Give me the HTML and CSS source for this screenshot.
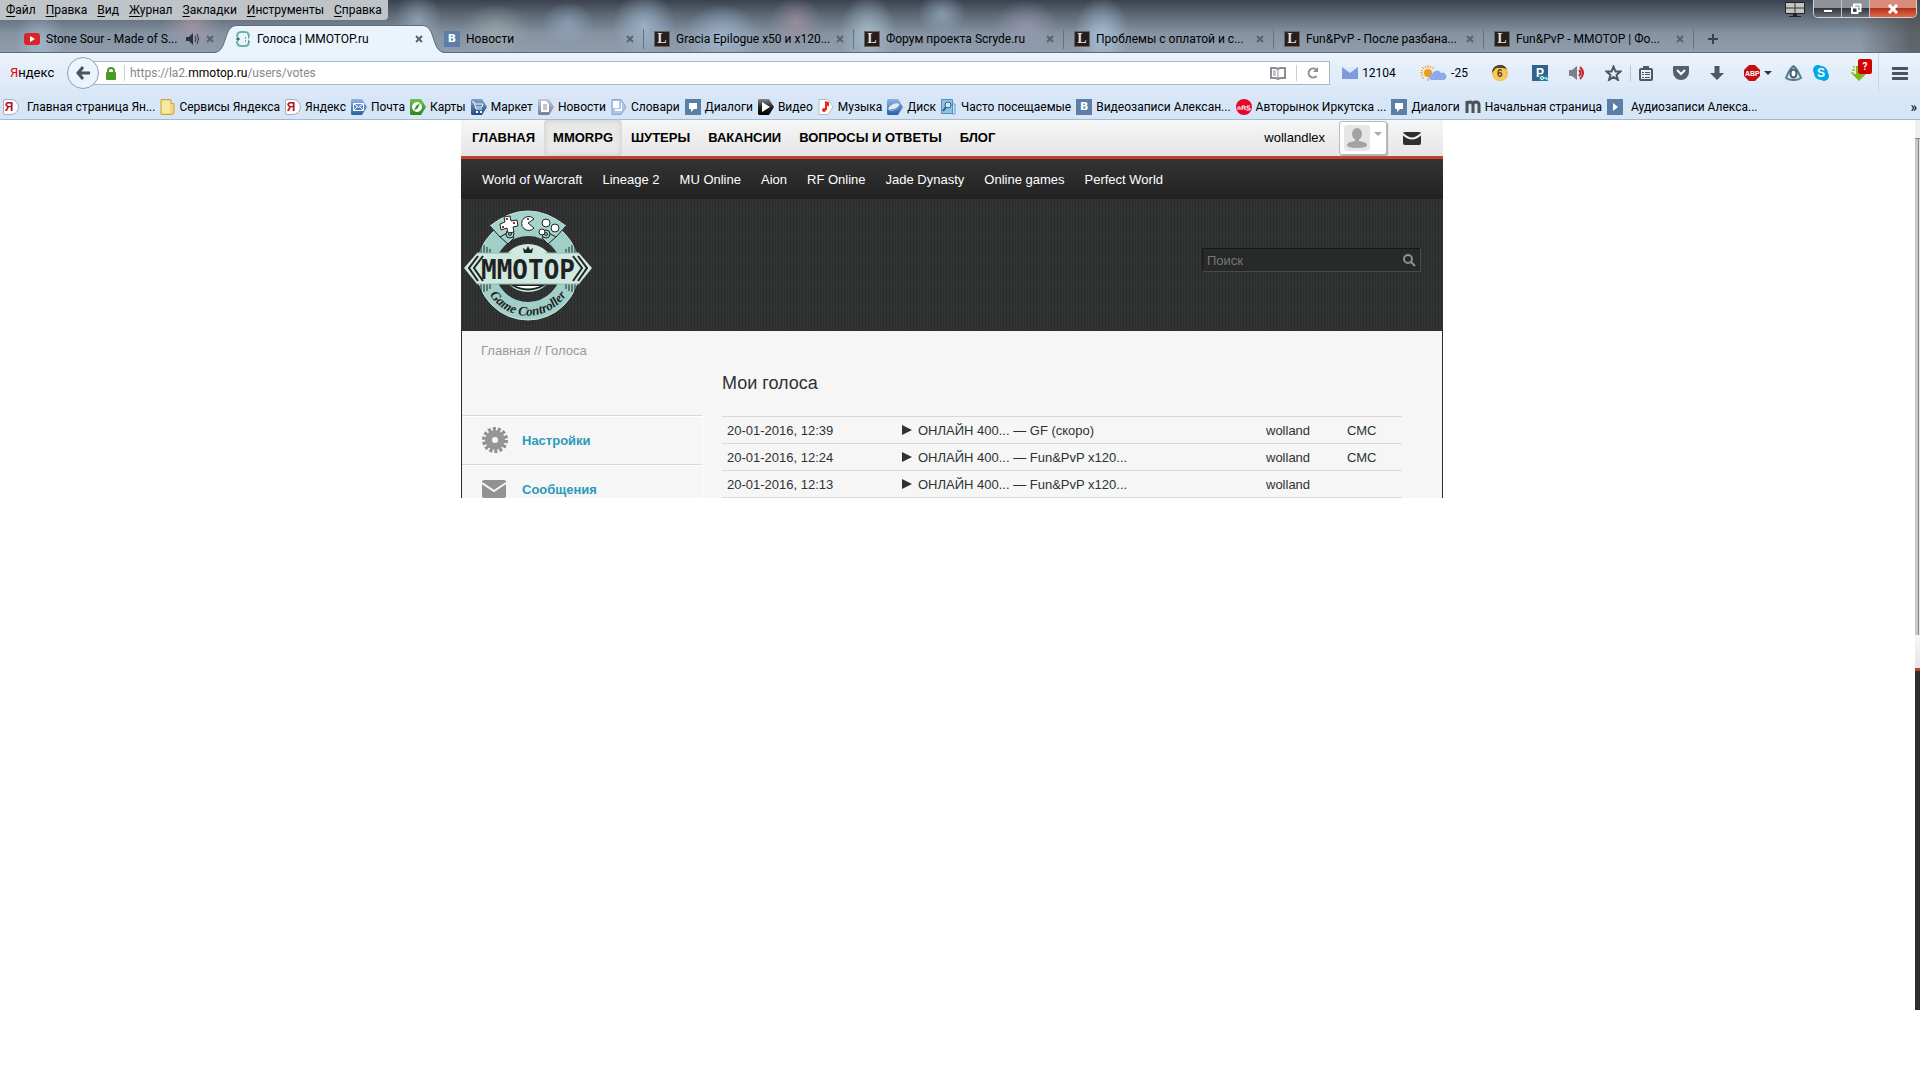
FILE: index.html
```html
<!DOCTYPE html>
<html lang="ru">
<head>
    <meta charset="UTF-8">
    <meta name="viewport" content="width=device-width, initial-scale=1.0">
    <title>Голоса | MMOTOP.ru</title>
    <link rel="stylesheet" href="styles.css">
</head>
<body>
    <!-- Общие иконки -->
    <svg class="sprite" aria-hidden="true">
        <linearGradient id="g-blue" x2="0" y2="1"><stop stop-color="#8fb4e6"/><stop offset="1" stop-color="#2c5ea8"/></linearGradient>
        <linearGradient id="g-steel" x2="0" y2="1"><stop stop-color="#7fa3cd"/><stop offset="1" stop-color="#204a80"/></linearGradient>
        <linearGradient id="g-gray" x2="0" y2="1"><stop stop-color="#c5c8dc"/><stop offset="1" stop-color="#77799a"/></linearGradient>
        <linearGradient id="g-green" x2="0" y2="1"><stop stop-color="#6cc04a"/><stop offset="1" stop-color="#2c8420"/></linearGradient>
        <linearGradient id="g-black" x2="0" y2="1"><stop stop-color="#888"/><stop offset=".5" stop-color="#222"/><stop offset="1"/></linearGradient>
        <symbol id="i-dialog" viewBox="0 0 16 16"><path d="M0 0h16v16H0z" fill="#5b7fa6"/><path d="M4 4h8v6H9l-3 3v-3H4z" fill="#fff"/></symbol>
        <symbol id="i-close" viewBox="0 0 8 8"><path d="M1 1l6 6M7 1L1 7" stroke="#59636f" stroke-width="2"/></symbol>
    </svg>

    <header class="browser">
        <div class="titlebar">
            <div class="menu-row">
                <nav class="menubar">
                    <button>Файл</button>
                    <button>Правка</button>
                    <button>Вид</button>
                    <button>Журнал</button>
                    <button>Закладки</button>
                    <button>Инструменты</button>
                    <button>Справка</button>
                </nav>
                <div class="window-tools">
                    <svg class="monitor" width="20" height="15" viewBox="0 0 20 15"><path d="M.5.5h19v11H.5z" fill="#c4c4c0" stroke="#222"/><path d="M0 6h20M10 0v12" stroke="#333"/><path d="M8 12h4v2h4v1H4v-1h4z" fill="#222"/></svg>
                    <div class="window-buttons">
                        <button class="win-min" aria-label="Свернуть"><svg width="12" height="10" viewBox="0 0 12 10"><path d="M1.500 5.500h9v3h-9z" fill="#fff" stroke="#444"/></svg></button>
                        <button class="win-max" aria-label="Восстановить"><svg width="12" height="12" viewBox="0 0 12 12"><path d="M4 4V1.500h6.500V8H8" fill="none" stroke="#fff" stroke-width="2"/><path d="M2 4.500h5.500V10H2z" fill="none" stroke="#fff" stroke-width="2"/></svg></button>
                        <button class="win-close" aria-label="Закрыть"><svg width="12" height="10" viewBox="0 0 12 10"><path d="M2 1l8 8M10 1L2 9" stroke="#fff" stroke-width="3"/></svg></button>
                    </div>
                </div>
            </div>

            <div class="tabs">
                <div class="tab">
                    <svg width="16" height="16" viewBox="0 0 16 16"><rect y="2" width="16" height="12" rx="3" fill="#d9252a"/><path d="M6 5l5 3-5 3z" fill="#fff"/></svg>
                    <a href="#">Stone Sour - Made of S...</a>
                    <svg width="14" height="12" viewBox="0 0 14 12"><path d="M0 4h3l4-4v12L3 8H0z" fill="#2d333a"/><path d="M9 3q2 3 0 6M11 1q3 5 0 10" fill="none" stroke="#2d333a"/></svg>
                    <button aria-label="Закрыть вкладку"><svg width="8" height="8"><use href="#i-close"/></svg></button>
                </div>
                <div class="tab active">
                    <svg class="tab-shape" width="233" height="28" viewBox="0 0 233 28"><path d="M0 28C16 28 9 .5 24 .5H209C224 .5 217 28 233 28z" fill="#ebf3fc"/><path d="M0 27.500C16 27.500 9 .5 24 .5H209C224 .5 217 27.500 233 27.500" fill="none" stroke="#5d6b7b"/></svg>
                    <svg width="16" height="16" viewBox="0 0 16 16"><path d="M2 6q0-5 4-5h4q4 0 4 5M2 10q0 5 4 5h4q4 0 4-5" fill="none" stroke="#63b5a6" stroke-width="2"/><path d="M1 8h4M3 6v4M10 7h1M13 7h1M10 10h1M13 10h1" stroke="#26453f"/></svg>
                    <a href="#">Голоса | MMOTOP.ru</a>
                    <button aria-label="Закрыть вкладку"><svg width="8" height="8"><use href="#i-close"/></svg></button>
                </div>
                <div class="tab">
                    <span class="ico ico-vk">B</span>
                    <a href="#">Новости</a>
                    <button aria-label="Закрыть вкладку"><svg width="8" height="8"><use href="#i-close"/></svg></button>
                </div>
                <div class="tab">
                    <span class="ico ico-l2">L</span>
                    <a href="#">Gracia Epilogue x50 и x120...</a>
                    <button aria-label="Закрыть вкладку"><svg width="8" height="8"><use href="#i-close"/></svg></button>
                </div>
                <div class="tab">
                    <span class="ico ico-l2">L</span>
                    <a href="#">Форум проекта Scryde.ru</a>
                    <button aria-label="Закрыть вкладку"><svg width="8" height="8"><use href="#i-close"/></svg></button>
                </div>
                <div class="tab">
                    <span class="ico ico-l2">L</span>
                    <a href="#">Проблемы с оплатой и с...</a>
                    <button aria-label="Закрыть вкладку"><svg width="8" height="8"><use href="#i-close"/></svg></button>
                </div>
                <div class="tab">
                    <span class="ico ico-l2">L</span>
                    <a href="#">Fun&amp;PvP - После разбана...</a>
                    <button aria-label="Закрыть вкладку"><svg width="8" height="8"><use href="#i-close"/></svg></button>
                </div>
                <div class="tab">
                    <span class="ico ico-l2">L</span>
                    <a href="#">Fun&amp;PvP - MMOTOP | Фо...</a>
                    <button aria-label="Закрыть вкладку"><svg width="8" height="8"><use href="#i-close"/></svg></button>
                </div>
                <button class="new-tab" aria-label="Новая вкладка"><svg width="10" height="10" viewBox="0 0 10 10"><path d="M5 0v10M0 5h10" stroke="#38424d" stroke-width="2"/></svg></button>
            </div>
        </div>

        <div class="toolbar">
            <a class="yandex" href="#"><span>Я</span>ндекс</a>
            <button class="back" aria-label="Назад"><svg width="16" height="16" viewBox="0 0 16 16"><path d="M8 2L3 8l5 6M3 8h12" fill="none" stroke="#4a545f" stroke-width="3"/></svg></button>
            <div class="urlbar">
                <svg width="10" height="13" viewBox="0 0 10 13"><path d="M2 6V4a3 3 0 0 1 6 0v2" fill="none" stroke="#4a9a27" stroke-width="2"/><rect y="5" width="10" height="8" rx="1" fill="#4a9a27"/></svg>
                <a class="url" href="#">https://la2.<b>mmotop.ru</b>/users/votes</a>
                <button class="reader" aria-label="Режим чтения"><svg width="16" height="13" viewBox="0 0 16 13"><path d="M1 1h5l2 1 2-1h5v10h-5l-2 1-2-1H1z" fill="none" stroke="#8b8f94" stroke-width="2"/><path d="M8 2v10M3 4h3M3 6h3M3 8h3" stroke="#8b8f94"/></svg></button>
                <button class="reload" aria-label="Обновить"><svg width="12" height="12" viewBox="0 0 12 12"><path d="M9.500 9A4.500 4.500 0 1 1 9 2.500" fill="none" stroke="#8b8f94" stroke-width="2"/><path d="M11 0v5H6z" fill="#8b8f94"/></svg></button>
            </div>
            <div class="addons">
                <button><svg width="16" height="12" viewBox="0 0 16 12"><path d="M0 0h16v12H0z" fill="#7f9bd9"/><path d="M0 0h16L8 6z" fill="#dfe8fa"/></svg>12104</button>
                <button><svg width="27" height="16" viewBox="0 0 27 16"><circle cx="8" cy="8" r="4" fill="#f39a14"/><path d="M8 0v3M8 13v3M0 8h3M2 2l2 2M14 2l-2 2M2 14l2-2M5 1l1 2M11 1l-1 2M1 5l2 1M1 11l2-1" stroke="#f39a14"/><path d="M12 15a3 3 0 0 1 0-6 5 5 0 0 1 9-1 3.500 3.500 0 0 1 3 7z" fill="#8eaae8"/></svg>-25</button>
                <button aria-label="Пробки"><svg width="18" height="16" viewBox="0 0 18 16"><circle cx="9" cy="8" r="8" fill="#f5bd43"/><path d="M1 8a8 8 0 0 1 15-4l-4-1H5z" fill="#4b4437"/><circle cx="9" cy="9" r="6" fill="#f8c95e"/><text x="6" y="12" font-family="Liberation Sans" font-weight="bold" font-size="10" fill="#594418">6</text></svg></button>
                <button aria-label="Пароли"><svg width="16" height="16" viewBox="0 0 16 16"><path d="M0 0h16v16H0z" fill="#35618e"/><path d="M7 10h9v6H7z" fill="#19849c"/><text x="4" y="12" font-family="Liberation Sans" font-weight="bold" font-size="12" fill="#fff">P</text><path d="M11 13h4v2" fill="none" stroke="#fff"/><circle cx="10" cy="13" r="1.500" fill="none" stroke="#fff"/></svg></button>
                <button aria-label="Звук"><svg width="18" height="16" viewBox="0 0 18 16"><path d="M0 5h3l5-4v14l-5-4H0z" fill="#7b7f86"/><path d="M10 5q3 3 0 6M11 2q6 6 0 12" fill="none" stroke="#c9232c" stroke-width="2"/></svg></button>
                <button aria-label="В закладки"><svg width="17" height="16" viewBox="0 0 17 16"><path d="M8.500 1.500l2 5h5l-4 3.500 1.500 5-4.500-3-4.500 3L5.500 10l-4-3.500h5z" fill="none" stroke="#4e5862" stroke-width="2"/></svg></button>
                <button class="split" aria-label="Закладки"><svg width="14" height="15" viewBox="0 0 14 15"><rect x="1" y="3" width="12" height="11" rx="1" fill="none" stroke="#4e5862" stroke-width="2"/><path d="M4 0h6v3H4zM3 6h2v1H3zm3 0h5v1H6zM3 8h2v1H3zm3 0h5v1H6zM3 11h2v1H3zm3 0h5v1H6z" fill="#4e5862"/></svg></button>
                <button aria-label="Pocket"><svg width="16" height="14" viewBox="0 0 16 14"><path d="M0 1q0-1 1-1h14q1 0 1 1v5a8 8 0 0 1-16 0z" fill="#555f6a"/><path d="M4 4l4 4 4-4" fill="none" stroke="#fff" stroke-width="2"/></svg></button>
                <button aria-label="Загрузки"><svg width="14" height="14" viewBox="0 0 14 14"><path d="M4.500 0h5v7H14l-7 7-7-7h4.500z" fill="#4e5862"/></svg></button>
                <button aria-label="Adblock Plus"><svg width="28" height="16" viewBox="0 0 28 16"><path d="M5 0h6l5 5v6l-5 5H5l-5-5V5z" fill="#c70d0d"/><text x="1" y="11" font-family="Liberation Sans" font-weight="bold" font-size="7" fill="#fff">ABP</text><path d="M20 6h8l-4 4z" fill="#333"/></svg></button>
                <button aria-label="Дополнение"><svg width="17" height="16" viewBox="0 0 17 16"><path d="M8.500 1C4 4 3 9 1 13q3 2 7.500 2t7.500-2C14 9 13 4 8.500 1z" fill="#d9e4ea" stroke="#4c7f92" stroke-width="2"/><ellipse cx="8.500" cy="8.500" rx="3" ry="4" fill="#fff" stroke="#4b5561" stroke-width="2"/></svg></button>
                <button aria-label="Skype"><svg width="16" height="16" viewBox="0 0 16 16"><circle cx="5" cy="5" r="5" fill="#00a7e8"/><circle cx="11" cy="11" r="5" fill="#00a7e8"/><circle cx="8" cy="8" r="7" fill="#00a7e8"/><text x="4" y="12" font-family="Liberation Sans" font-weight="bold" font-size="12" fill="#fff">S</text></svg></button>
                <button class="helper" aria-label="Скачать"><svg width="15" height="16" viewBox="0 0 15 16"><path d="M5 1h6v8h4l-7 7-7-7h4z" fill="#7fba1d"/><path d="M1 5h3M0 8h3M2 2h2" stroke="#a4d540" stroke-width="2"/></svg><span class="badge">?</span></button>
                <button class="split-left" aria-label="Меню"><svg width="16" height="13" viewBox="0 0 16 13"><path d="M1 1.500h14M1 6.500h14M1 11.500h14" stroke="#4a545f" stroke-width="3" stroke-linecap="round"/></svg></button>
            </div>
        </div>

        <nav class="bookmarks">
            <a class="wide" href="#"><span class="ico ico-ya">Я</span>Главная страница Ян...</a>
            <a href="#"><svg width="15" height="16" viewBox="0 0 15 16"><path d="M1 .5h10v4h3v10l-2 1H1z" fill="#f3d677" stroke="#c9a642"/><path d="M2 2h8v12H2z" fill="#f9e7a3"/></svg>Сервисы Яндекса</a>
            <a href="#"><span class="ico ico-ya">Я</span>Яндекс</a>
            <a href="#"><svg width="16" height="16" viewBox="0 0 16 16"><path d="M1 0h10l5 8-5 8H1l-1-1V1z" fill="url(#g-blue)"/><path d="M2.500 4.500h10v7h-10z" fill="none" stroke="#fff"/><path d="M2.500 4.500l5 4 5-4M2.500 11.500l4-4M12.500 11.500l-4-4" fill="none" stroke="#fff"/></svg>Почта</a>
            <a href="#"><svg width="16" height="16" viewBox="0 0 16 16"><path d="M1 0h10l5 8-5 8H1l-1-1V1z" fill="url(#g-green)"/><circle cx="7" cy="8" r="5" fill="#fff"/><path d="M10 4L8 9l-4 3 2-5z" fill="#3a932c"/></svg>Карты</a>
            <a href="#"><svg width="16" height="16" viewBox="0 0 16 16"><path d="M1 0h10l5 8-5 8H1l-1-1V1z" fill="url(#g-steel)"/><path d="M1 3h2l2 7h6M4 5h8l-1 3H5" fill="none" stroke="#fff"/><path d="M5 12h2v2H5zM9 12h2v2H9z" fill="#fff"/></svg>Маркет</a>
            <a href="#"><svg width="16" height="16" viewBox="0 0 16 16"><path d="M1 0h10l5 8-5 8H1l-1-1V1z" fill="url(#g-gray)"/><path d="M3 2h5l3 3v8H3z" fill="#fff"/><path d="M5 6h4M5 8h4M5 10h4" stroke="#8587a8"/></svg>Новости</a>
            <a href="#"><svg width="16" height="16" viewBox="0 0 16 16"><path d="M1 .5h9l5 7.500-5 7.500H1z" fill="#a9c6e8" stroke="#86a6cc"/><path d="M2 2h6v7H2zM4 10h6V4h1v8H4z" fill="#fff"/></svg>Словари</a>
            <a href="#"><svg width="16" height="16"><use href="#i-dialog"/></svg>Диалоги</a>
            <a href="#"><svg width="16" height="16" viewBox="0 0 16 16"><path d="M1 0h10l5 8-5 8H1l-1-1V1z" fill="url(#g-black)"/><path d="M4 3l8 5-8 5z" fill="#fff"/></svg>Видео</a>
            <a href="#"><svg width="16" height="16" viewBox="0 0 16 16"><path d="M1 .5h9l5 7.500-5 7.500H1z" fill="#fff" stroke="#bbb"/><path d="M7 3l3 1v2L8 5v6" fill="none" stroke="#e02a20" stroke-width="2"/><circle cx="6" cy="11" r="2" fill="#e02a20"/></svg>Музыка</a>
            <a href="#"><svg width="16" height="16" viewBox="0 0 16 16"><path d="M1 0h10l5 8-5 8H1l-1-1V1z" fill="url(#g-blue)"/><ellipse cx="7" cy="8" rx="6" ry="3" transform="rotate(-25 7 8)" fill="#dfeaf8"/><path d="M3 11q7 0 10-5" fill="none" stroke="#4577b8"/></svg>Диск</a>
            <a href="#"><svg width="16" height="16" viewBox="0 0 16 16"><path d="M.5.5h11v14H.5z" fill="#8fc1e3" stroke="#4f8fbc"/><path d="M12 5h2v10h-3" fill="none" stroke="#5f9cc6"/><circle cx="7" cy="6" r="3" fill="#cfe8f8" stroke="#2d5f88"/><path d="M5 8l-3 4" stroke="#2d5f88" stroke-width="2"/></svg>Часто посещаемые</a>
            <a href="#"><span class="ico ico-vk">B</span>Видеозаписи Алексан...</a>
            <a href="#"><svg width="16" height="16" viewBox="0 0 16 16"><circle cx="8" cy="8" r="8" fill="#e4082b"/><path d="M2 11V8h2v3M6 11V7h3v4M6 9h3M10 11h4V9h-3V7h3" fill="none" stroke="#fff"/></svg>Авторынок Иркутска ...</a>
            <a href="#"><svg width="16" height="16"><use href="#i-dialog"/></svg>Диалоги</a>
            <a href="#"><svg width="16" height="16" viewBox="0 0 16 16"><path d="M2 14V2M2 6q0-3 3-3t3 3v8M8 6q0-3 3-3t3 3v8" fill="none" stroke="#4d5157" stroke-width="3"/></svg>Начальная страница</a>
            <a class="wide" href="#"><svg width="16" height="16" viewBox="0 0 16 16"><path d="M0 0h16v16H0z" fill="#5b7fa6"/><path d="M6 4l5 4-5 4z" fill="#fff"/></svg>Аудиозаписи Алекса...</a>
            <button class="more">»</button>
        </nav>
    </header>

    <div class="viewport">
        <main class="page">
            <div class="site">
                <nav class="top-nav">
                    <a href="#">ГЛАВНАЯ</a>
                    <a class="current" href="#">MMORPG</a>
                    <a href="#">ШУТЕРЫ</a>
                    <a href="#">ВАКАНСИИ</a>
                    <a href="#">ВОПРОСЫ И ОТВЕТЫ</a>
                    <a href="#">БЛОГ</a>
                    <div class="user">
                        <span>wollandlex</span>
                        <button class="avatar" aria-label="Профиль"><svg width="38" height="26" viewBox="0 0 38 26"><rect width="26" height="26" rx="3" fill="#e6e6e6"/><ellipse cx="13" cy="9" rx="5" ry="6" fill="#a3a3a3"/><path d="M11 13h4v3q8 1 8 4t-10 3-10-3 8-4z" fill="#a3a3a3"/><path d="M30 7h8l-4 4z" fill="#aaa"/></svg></button>
                        <a class="mail" href="#" aria-label="Сообщения"><svg width="18" height="13" viewBox="0 0 18 13"><rect width="18" height="13" rx="2" fill="#2f2f2f"/><path d="M0 2q9 9 18 0" fill="none" stroke="#f0f0f0" stroke-width="2"/></svg></a>
                    </div>
                </nav>

                <nav class="sub-nav">
                    <a href="#">World of Warcraft</a>
                    <a href="#">Lineage 2</a>
                    <a href="#">MU Online</a>
                    <a href="#">Aion</a>
                    <a href="#">RF Online</a>
                    <a href="#">Jade Dynasty</a>
                    <a href="#">Online games</a>
                    <a href="#">Perfect World</a>
                </nav>

                <div class="banner">
                    <a class="logo" href="#" aria-label="MMOTOP Game Controller">
                        <svg width="130" height="114" viewBox="0 0 130 114">
                            <!-- кольцо -->
                            <circle cx="65" cy="61" r="42" fill="none" stroke="#9fcfc7" stroke-width="18"/>
                            <circle cx="65" cy="61" r="51" fill="none" stroke="#c8e5df"/>
                            <!-- верхняя лента -->
                            <path d="M47 24l4 6-6 6-9-8zM83 24l-4 6 6 6 9-8z" fill="#9fcfc7" stroke="#1f2222"/>
                            <path d="M27 18Q65-12 103 18L94 29 82 23Q65 17 48 23L36 29z" fill="#a6d3cb"/>
                            <path d="M27 18Q65-12 103 18" fill="none" stroke="#c8e5df"/>
                            <path d="M27 18l10 11 11-6M103 18L93 29l-11-6" fill="none" stroke="#1f2222"/>
                            <g fill="#a6d3cb" stroke="#1f2222"><circle cx="47" cy="26" r="4"/><circle cx="47" cy="26" r="1.500"/><circle cx="83" cy="26" r="4"/><circle cx="83" cy="26" r="1.500"/></g>
                            <!-- крестовина, пакман, кнопки -->
                            <path d="M41 9l6-1 1 5 6-1 1 6-5 1 1 5-6 1-1-5-6 2-1-6 5-2z" fill="#fff" stroke="#1f2222"/>
                            <path d="M44 10v2M51 14v2M40 18v2" stroke="#a02a2a" stroke-width="2"/>
                            <path d="M65 15l6-4a7 7 0 1 0 0 9z" fill="#fff" stroke="#1f2222"/>
                            <circle cx="65" cy="11" r="1" fill="#1f2222"/>
                            <g fill="#fff" stroke="#1f2222"><circle cx="83" cy="15" r="4"/><circle cx="92" cy="20" r="4"/><circle cx="79" cy="24" r="3"/></g>
                            <!-- штриховка -->
                            <path d="M18 38v7M21 37v8M24 39v6M27 41v4M112 38v7M109 37v8M106 39v6M103 41v4M18 76v8M21 76v8M24 76v7M27 76v5M112 76v8M109 76v8M106 76v7M103 76v5" stroke="#1f2222"/>
                            <!-- центр и лента -->
                            <ellipse cx="65" cy="60" rx="27" ry="25" fill="#303333"/>
                            <ellipse cx="65" cy="60" rx="26" ry="24" fill="#cfe9df"/>
                            <path d="M49 77q16 9 32 0z" fill="#fff" stroke="#1f2222" stroke-width="2"/>
                            <path d="M1 60L14 45H116L129 60 116 76H14z" fill="#cfe9df"/>
                            <path d="M14 45h34M82 45h34M116 76H14" stroke="#8fbdb3"/>
                            <path d="M15 48L6 60l9 13M20 48l-9 12 9 13M115 48l9 12-9 13M110 48l9 12-9 13" fill="none" stroke="#1f2222" stroke-width="2"/>
                            <path d="M60 40l3 2 2-4 2 4 3-2-1 5h-8z" fill="#1f2222"/>
                            <text class="logo-name" x="65" y="71" text-anchor="middle">MMOTOP</text>
                            <path id="logo-arc" d="M22 78A46 46 0 0 0 108 78" fill="none"/>
                            <text class="logo-sub"><textPath href="#logo-arc" startOffset="50%" text-anchor="middle">Game Controller</textPath></text>
                        </svg>
                    </a>
                    <form class="search">
                        <input type="text" placeholder="Поиск" aria-label="Поиск">
                        <button type="button" aria-label="Найти"><svg width="13" height="13" viewBox="0 0 13 13"><circle cx="5" cy="5" r="4" fill="none" stroke="#8d9090" stroke-width="2"/><path d="M8 8l4 4" stroke="#8d9090" stroke-width="2"/></svg></button>
                    </form>
                </div>

                <div class="content">
                    <div class="breadcrumbs"><a href="#">Главная</a> // Голоса</div>
                    <div class="columns">
                        <aside class="side-menu">
                            <a href="#"><svg width="26" height="26" viewBox="0 0 26 26"><circle cx="13" cy="13" r="11" fill="none" stroke="#8e8e8e" stroke-width="4" stroke-dasharray="3 1.937"/><circle cx="13" cy="13" r="6.500" fill="none" stroke="#969696" stroke-width="7"/></svg>Настройки</a>
                            <a href="#"><svg width="26" height="18" viewBox="0 0 26 18"><rect width="24" height="18" rx="2" fill="#929292"/><path d="M0 3l12 8 12-8" fill="none" stroke="#f6f6f6" stroke-width="2"/></svg>Сообщения</a>
                        </aside>
                        <section class="votes">
                            <h1>Мои голоса</h1>
                            <table>
                                <tr>
                                    <td>20-01-2016, 12:39</td>
                                    <td><i class="arrow"></i>ОНЛАЙН 400... — GF (скоро)</td>
                                    <td>wolland</td>
                                    <td>СМС</td>
                                </tr>
                                <tr>
                                    <td>20-01-2016, 12:24</td>
                                    <td><i class="arrow"></i>ОНЛАЙН 400... — Fun&amp;PvP x120...</td>
                                    <td>wolland</td>
                                    <td>СМС</td>
                                </tr>
                                <tr>
                                    <td>20-01-2016, 12:13</td>
                                    <td><i class="arrow"></i>ОНЛАЙН 400... — Fun&amp;PvP x120...</td>
                                    <td>wolland</td>
                                    <td></td>
                                </tr>
                            </table>
                        </section>
                    </div>
                </div>
            </div>
        </main>
        <div class="edge">
            <div class="edge-top"></div>
            <div class="edge-thumb"></div>
            <div class="edge-light"></div>
            <div class="edge-dark"></div>
        </div>
    </div>
</body>
</html>
```
FILE: styles.css
```css
:root {
    --ui-font: Roboto, "Noto Sans", sans-serif;
    --site-font: "Liberation Sans", Arial, sans-serif;
    --accent: #c4412c;
    --link: #2b9ab8;
    --line: #d9d9d9;
    --site-bg: #f6f6f6;
}

* {
    margin: 0;
    padding: 0;
    box-sizing: border-box;
}

body {
    font-family: var(--site-font);
    font-size: 13px;
    color: #2d3234;
    background: #fff;
}

a {
    color: inherit;
    text-decoration: none;
}

button {
    border: 0;
    background: none;
    font: inherit;
    color: inherit;
}

svg {
    display: block;
    flex: none;
}

.sprite {
    position: absolute;
    width: 0;
    height: 0;
}

/* Буквенные значки сайтов */
.ico {
    flex: none;
    width: 16px;
    height: 16px;
    font-weight: bold;
    line-height: 16px;
    text-align: center;
}

.ico-vk {
    background: #5b7fa6;
    color: #fff;
    font-family: "DejaVu Sans", sans-serif;
    font-size: 11px;
}

.ico-l2 {
    border: 1px solid #6d6259;
    background: #241f1e;
    color: #e6ded3;
    font-family: "Liberation Serif", serif;
    font-size: 14px;
    line-height: 14px;
}

.ico-ya {
    padding-right: 4px;
    border: 1px solid #aab;
    border-radius: 2px 8px 8px 2px;
    background: #fff;
    color: #b8141c;
    font-family: "Liberation Sans", sans-serif;
    font-size: 12px;
    line-height: 14px;
}

/* Окно браузера */
.browser {
    font-family: var(--ui-font);
    font-size: 12px;
    line-height: 16px;
    color: #000;
    white-space: nowrap;
    background: linear-gradient(#ebf3fc 53px, #d7e6f7 100px);
}

.titlebar {
    height: 53px;
    border-bottom: 1px solid #5d6b7b;
    background:
        radial-gradient(ellipse 26px 34px at 40px 44px, #a9c0d6aa, transparent),
        radial-gradient(ellipse 30px 22px at 192px 26px, #c0a0b088, transparent),
        radial-gradient(ellipse 24px 28px at 418px 20px, #a9c0d688, transparent),
        radial-gradient(ellipse 34px 28px at 496px 32px, #a8b5ae99, transparent),
        radial-gradient(ellipse 26px 22px at 568px 24px, #9ab0c899, transparent),
        radial-gradient(ellipse 32px 34px at 644px 26px, #a3bbd4cc, transparent),
        radial-gradient(ellipse 38px 34px at 722px 38px, #a3bbd4cc, transparent),
        radial-gradient(ellipse 26px 26px at 796px 22px, #b096a499, transparent),
        radial-gradient(ellipse 28px 40px at 868px 34px, #adc6d4cc, transparent),
        radial-gradient(ellipse 24px 22px at 942px 14px, #a3bbd499, transparent),
        radial-gradient(ellipse 32px 26px at 1026px 26px, #a79fbc99, transparent),
        radial-gradient(ellipse 28px 40px at 1102px 36px, #adc6e0cc, transparent),
        linear-gradient(90deg, transparent 1860px, #4a4b4caa 1910px),
        linear-gradient(#3a424e, #5f6b78 30%, #8593a3 65%, #8e9cac);
}

.menu-row {
    display: flex;
    justify-content: space-between;
    height: 25px;
}

.menubar {
    display: flex;
    gap: 10px;
    height: 20px;
    padding: 0 6px;
    border-radius: 0 0 4px 0;
    background: #bfc4c9;
}

.menubar button::first-letter {
    text-decoration: underline;
    text-underline-offset: 2px;
}

.window-tools {
    display: flex;
    gap: 8px;
    padding-right: 3px;
}

.monitor {
    margin-top: 2px;
}

.window-buttons {
    display: flex;
    height: 18px;
    border: 1px solid #d0d4d8;
    border-top: 0;
    border-radius: 0 0 5px 5px;
    overflow: hidden;
}

.window-buttons button {
    display: flex;
    align-items: center;
    justify-content: center;
    width: 28px;
    border-right: 1px solid #c0c4c8;
    background: linear-gradient(#8d9299 45%, #31363d 50%, #6a7078);
}

.window-buttons .win-close {
    width: 46px;
    border-right: 0;
    background: linear-gradient(#d98b7c 45%, #b5311b 50%, #dd6a4a);
}

.tabs {
    display: flex;
    padding-left: 14px;
}

.tab {
    position: relative;
    display: flex;
    flex: 0 1 210px;
    align-items: center;
    gap: 6px;
    height: 28px;
    padding: 0 10px;
    min-width: 0;
    background: linear-gradient(#66727f, #66727f) right 4px / 1px 20px no-repeat;
}

.tab a {
    flex: 1;
    overflow: hidden;
}

.tab:first-child,
.tab.active {
    background: none;
}

.tab.active {
    z-index: 1;
    padding: 0 11px;
}

.tab.active > * {
    position: relative;
}

.tab.active .tab-shape {
    position: absolute;
    left: -11px;
    top: 0;
}

.new-tab {
    padding: 0 14px;
}

.toolbar {
    display: flex;
    align-items: center;
    height: 40px;
    padding-left: 10px;
}

.yandex {
    width: 57px;
    font-size: 13px;
}

.yandex span {
    color: #e00;
}

.back {
    position: relative;
    z-index: 1;
    display: flex;
    align-items: center;
    justify-content: center;
    width: 32px;
    height: 32px;
    border: 1px solid #8f9fb3;
    border-radius: 50%;
    background: #ebf3fc;
}

.urlbar {
    display: flex;
    flex: 1;
    align-items: center;
    height: 24px;
    margin-left: -6px;
    padding-left: 12px;
    border: 1px solid #a3b6cc;
    background: #fff;
}

.url {
    flex: 1;
    margin-left: 8px;
    padding-left: 5px;
    border-left: 1px solid #ccc;
    color: #888;
}

.url b {
    font-weight: normal;
    color: #000;
}

.reader {
    padding: 0 10px;
}

.reload {
    padding: 2px 10px;
    border-left: 1px solid #c5d0dc;
}

.addons {
    display: grid;
    grid-template-columns: 78px 72px 40px 40px 36px 34px 32px 38px 34px 48px 22px 34px 40px 42px;
    height: 40px;
}

.addons button {
    display: flex;
    align-items: center;
    justify-content: center;
    gap: 4px;
}

.addons .split {
    background: linear-gradient(#b8c6d6, #b8c6d6) left center / 1px 16px no-repeat;
}

.addons .split-left {
    border-left: 1px solid #c9d7e7;
}

.helper {
    position: relative;
}

.badge {
    position: absolute;
    left: 20px;
    top: 6px;
    width: 14px;
    height: 15px;
    border-radius: 2px;
    background: #d40000;
    color: #fff;
    font-size: 10px;
    font-weight: bold;
    line-height: 15px;
}

.bookmarks {
    display: flex;
    gap: 5px;
    height: 27px;
    padding: 1px 3px 0;
    align-items: center;
    border-bottom: 1px solid #a3bad4;
}

.bookmarks a {
    display: flex;
    align-items: center;
    gap: 4px;
}

.bookmarks .wide {
    gap: 8px;
}

.more {
    margin-left: auto;
    font-size: 14px;
}

/* Страница сайта */
.viewport {
    display: flex;
}

.page {
    flex: 1;
    padding-right: 11px;
}

.site {
    max-width: 982px;
    margin: 0 auto;
}

.top-nav {
    display: flex;
    height: 39px;
    padding-left: 2px;
    border-bottom: 3px solid var(--accent);
    background: linear-gradient(#f6f6f6, #e6e6e6);
    font-weight: bold;
    line-height: 36px;
    color: #000;
}

.top-nav > a {
    padding: 0 9px;
}

.top-nav .current {
    border-radius: 4px;
    background: #e9e9e9;
    box-shadow: inset 0 0 6px #c8c8c8;
}

.user {
    display: flex;
    align-items: center;
    gap: 14px;
    margin-left: auto;
    padding-right: 22px;
    font-weight: normal;
}

.avatar {
    padding: 3px 4px;
    border: 1px solid #bbb;
    border-radius: 3px;
    background: #fff;
    box-shadow: 1px 1px 1px #aaa;
}

.mail {
    padding-left: 2px;
}

.sub-nav {
    display: flex;
    gap: 20px;
    height: 40px;
    padding-left: 21px;
    background: linear-gradient(#343434, #222);
    line-height: 42px;
    color: #fff;
}

.banner {
    display: flex;
    align-items: flex-start;
    justify-content: space-between;
    height: 132px;
    padding: 9px 22px 0 2px;
    background:
        repeating-linear-gradient(90deg, #0000 0 2px, #0002 2px 3px),
        repeating-linear-gradient(#0000 0 2px, #0001 2px 3px),
        #333535;
}

.logo-name {
    font: bold 26px "DejaVu Sans Mono", monospace;
    fill: #1f2222;
}

.logo-sub {
    font: italic bold 13px "Liberation Serif", serif;
    fill: #1f2222;
}

.search {
    display: flex;
    width: 219px;
    height: 24px;
    margin-top: 40px;
    border: 1px solid #474a4a;
    border-top-color: #151616;
    border-left-color: #151616;
    background: #282a2a;
}

.search input {
    flex: 1;
    min-width: 0;
    padding-left: 4px;
    border: 0;
    background: none;
    font: inherit;
    color: #fff;
}

.search input::placeholder {
    color: #777;
}

.search button {
    padding: 0 4px;
}

.content {
    border: 1px solid #2b2b2b;
    border-width: 0 1px;
    background: var(--site-bg);
}

.breadcrumbs {
    padding: 12px 19px 0;
    line-height: 16px;
    color: #999;
}

/* Видна только верхняя часть списка */
.columns {
    display: flex;
    gap: 19px;
    height: 139px;
    padding-right: 40px;
    overflow: hidden;
}

.side-menu {
    flex: none;
    width: 241px;
    padding-top: 56px;
}

.side-menu a {
    display: flex;
    align-items: center;
    gap: 14px;
    height: 49px;
    padding-left: 20px;
    border-top: 1px solid var(--line);
    border-right: 1px solid #fff;
    box-shadow: inset 0 1px #fff;
    font-weight: bold;
    color: var(--link);
}

.votes {
    flex: 1;
}

.votes h1 {
    height: 57px;
    padding-top: 13px;
    font-size: 18px;
    font-weight: normal;
    line-height: 22px;
}

.votes table {
    width: 100%;
    table-layout: fixed;
    border-collapse: collapse;
    border-top: 1px solid var(--line);
}

.votes td {
    height: 27px;
    padding-left: 5px;
    border-bottom: 1px solid var(--line);
}

.votes td:nth-child(1) {
    width: 175px;
}

.votes td:nth-child(3) {
    width: 81px;
}

.votes td:nth-child(4) {
    width: 60px;
}

.arrow {
    display: inline-block;
    margin-right: 6px;
    border: solid transparent;
    border-width: 5px 0 5px 10px;
    border-left-color: #2d3234;
}

/* Край окна справа */
.edge {
    flex: none;
    width: 5px;
}

.edge-top {
    height: 18px;
    background: #f0f0f0;
}

.edge-thumb {
    height: 497px;
    background: linear-gradient(90deg, #c8c8ca 3px, #8a8a8c 3px 4px, #e5e5e5 4px);
    border-top: 1px solid #8a8a8c;
}

.edge-light {
    height: 36px;
    border-bottom: 3px solid var(--accent);
    background: linear-gradient(#f6f6f6, #e6e6e6);
}

.edge-dark {
    height: 339px;
    background: #2c2e2e;
}
```
